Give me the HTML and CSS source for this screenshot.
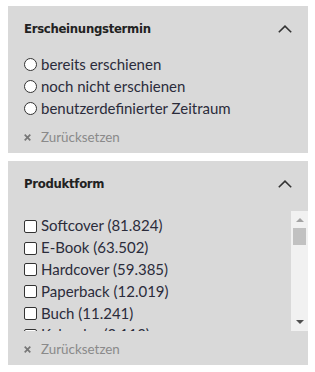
FILE: index.html
```html
<!DOCTYPE html>
<html lang="de">
<head>
<meta charset="utf-8">
<link rel="stylesheet" href="styles.css">
</head>
<body>
<div class="filters">
  <section class="panel">
    <div class="panel-head">
      <h3 class="panel-title">Erscheinungstermin</h3>
      <svg class="chevron" width="14" height="8" viewBox="0 0 14 8"><path d="M0.8 7.3 L7 1.2 L13.2 7.3" fill="none" stroke="#333" stroke-width="1.6"/></svg>
    </div>
    <ul class="options">
      <li class="option"><span class="radio"></span>bereits erschienen</li>
      <li class="option"><span class="radio"></span>noch nicht erschienen</li>
      <li class="option"><span class="radio"></span>benutzerdefinierter Zeitraum</li>
    </ul>
    <div class="reset"><svg class="reset-x" width="7" height="7" viewBox="0 0 7 7"><path d="M0.7 0.7 L6.3 6.3 M6.3 0.7 L0.7 6.3" stroke="#777" stroke-width="1.7"/></svg>Zurücksetzen</div>
  </section>
  <section class="panel">
    <div class="panel-head">
      <h3 class="panel-title">Produktform</h3>
      <svg class="chevron" width="14" height="8" viewBox="0 0 14 8"><path d="M0.8 7.3 L7 1.2 L13.2 7.3" fill="none" stroke="#333" stroke-width="1.6"/></svg>
    </div>
    <div class="scrollbox">
      <ul class="options checks">
        <li class="option"><span class="check"></span>Softcover (81.824)</li>
        <li class="option"><span class="check"></span>E-Book (63.502)</li>
        <li class="option"><span class="check"></span>Hardcover (59.385)</li>
        <li class="option"><span class="check"></span>Paperback (12.019)</li>
        <li class="option"><span class="check"></span>Buch (11.241)</li>
        <li class="option"><span class="check"></span>Kalender (2.113)</li>
      </ul>
      <div class="scrollbar">
        <span class="arrow-up"></span>
        <span class="thumb"></span>
        <span class="track-fill"></span>
        <span class="arrow-down"></span>
      </div>
    </div>
    <div class="reset"><svg class="reset-x" width="7" height="7" viewBox="0 0 7 7"><path d="M0.7 0.7 L6.3 6.3 M6.3 0.7 L0.7 6.3" stroke="#777" stroke-width="1.7"/></svg>Zurücksetzen</div>
  </section>
</div>
</body>
</html>
```
FILE: styles.css
```css
* { box-sizing: border-box; }
html, body { margin: 0; padding: 0; background: #fff; }
body { font-family: Lato, "Noto Sans", sans-serif; color: #2b2c3b; }
.filters {
  padding: 6px 7px 0 8px;
  display: flex;
  flex-direction: column;
  gap: 8px;
}
.panel {
  background: #d9d9d9;
}
.panel-head {
  display: flex;
  align-items: flex-start;
  justify-content: space-between;
  padding: 14px 16px 0 16px;
  height: 48px;
}
.panel-title {
  margin: 0;
  font-family: "DejaVu Sans Condensed", "Liberation Sans", sans-serif;
  font-weight: bold;
  font-size: 13px;
  letter-spacing: -0.3px;
  line-height: 18px;
  color: #222;
}
.chevron { margin-top: 5px; }
.options {
  list-style: none;
  margin: 0;
  padding: 0 16px;
}
.option {
  display: flex;
  align-items: center;
  height: 21.8px;
  font-size: 15px;
  line-height: 21.8px;
  white-space: nowrap;
}
.radio {
  width: 13px;
  height: 13px;
  border: 1px solid #333;
  border-radius: 50%;
  background: #fff;
  margin-right: 4px;
  flex: none;
}
.check {
  width: 13px;
  height: 13px;
  border: 1px solid #333;
  border-radius: 2px;
  background: #fff;
  margin-right: 4px;
  flex: none;
}
.scrollbox {
  display: flex;
  height: 120px;
  margin-top: 2px;
}
.checks {
  flex: 1;
  overflow: hidden;
  padding-top: 4px;
}
.scrollbar {
  width: 17px;
  background: #f1f1f1;
  display: flex;
  flex-direction: column;
  align-items: center;
}
.arrow-up {
  margin-top: 7px;
  width: 0; height: 0;
  border-left: 4px solid transparent;
  border-right: 4px solid transparent;
  border-bottom: 4px solid #a3a3a3;
}
.thumb {
  margin-top: 6px;
  width: 13px;
  height: 17px;
  background: #c1c1c1;
}
.track-fill { flex: 1; }
.arrow-down {
  margin-bottom: 7px;
  width: 0; height: 0;
  border-left: 4px solid transparent;
  border-right: 4px solid transparent;
  border-top: 4px solid #505050;
}
.reset {
  display: flex;
  align-items: center;
  padding: 8px 16px 6px 16px;
  font-size: 13.4px;
  line-height: 20px;
  color: #8a8a8a;
}
.reset-x {
  flex: none;
  margin-right: 10px;
}
```
